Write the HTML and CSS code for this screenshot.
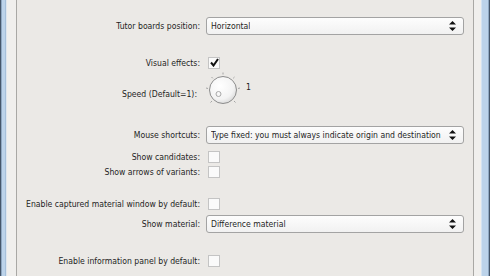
FILE: index.html
```html
<!DOCTYPE html>
<html lang="en">
<head>
    <meta charset="UTF-8">
    <title>Preferences</title>
    <link rel="stylesheet" href="styles.css">
</head>
<body>
    <div class="window">
        <div class="edge edge-left"></div>
        <div class="gutter"></div>
        <div class="panel">
            <div class="row row-combo r1">
                <span class="label">Tutor boards position:</span>
                <div class="combo"><span class="combo-text">Horizontal</span><span class="arrows"><svg width="7" height="10" viewBox="0 0 7 10"><path d="M3.5 0 L7 3.5 L0 3.5 Z M0 6.5 L7 6.5 L3.5 10 Z" fill="#111"/></svg></span></div>
            </div>
            <div class="row row-check r2">
                <span class="label">Visual effects:</span>
                <span class="check"><svg width="9" height="9" viewBox="0 0 9 9"><path d="M1 4.5 L3.5 7.5 L8 1" fill="none" stroke="#111" stroke-width="2"/></svg></span>
            </div>
            <div class="row row-knob r3">
                <span class="label label-knob">Speed (Default=1):</span>
                <div class="dial">
                    <svg width="36" height="36" viewBox="0 0 36 36">
                        <g stroke="#a4a4a4" stroke-width="1">
                            <line x1="18" y1="0.5" x2="18" y2="2.5"/>
                            <line x1="6.5" y1="5" x2="7.8" y2="6.3"/>
                            <line x1="29.5" y1="5" x2="28.2" y2="6.3"/>
                            <line x1="1" y1="16" x2="3" y2="16.5"/>
                            <line x1="35" y1="16" x2="33" y2="16.5"/>
                            <line x1="5.5" y1="30.5" x2="7" y2="29"/>
                            <line x1="30.5" y1="30.5" x2="29" y2="29"/>
                        </g>
                        <defs>
                            <radialGradient id="knob" cx="0.4" cy="0.35" r="0.7">
                                <stop offset="0" stop-color="#ffffff"/>
                                <stop offset="0.7" stop-color="#f3f3f3"/>
                                <stop offset="1" stop-color="#d8d8d8"/>
                            </radialGradient>
                        </defs>
                        <circle cx="18" cy="18" r="13.5" fill="url(#knob)" stroke="#8c8c8c"/>
                        <circle cx="13.5" cy="22" r="2.5" fill="none" stroke="#a8a8a8"/>
                    </svg>
                </div>
                <span class="dial-value">1</span>
            </div>
            <div class="row row-combo r4">
                <span class="label">Mouse shortcuts:</span>
                <div class="combo"><span class="combo-text">Type fixed: you must always indicate origin and destination</span><span class="arrows"><svg width="7" height="10" viewBox="0 0 7 10"><path d="M3.5 0 L7 3.5 L0 3.5 Z M0 6.5 L7 6.5 L3.5 10 Z" fill="#111"/></svg></span></div>
            </div>
            <div class="row row-check r5">
                <span class="label">Show candidates:</span>
                <span class="check"></span>
            </div>
            <div class="row row-check r6">
                <span class="label">Show arrows of variants:</span>
                <span class="check"></span>
            </div>
            <div class="row row-check r7">
                <span class="label">Enable captured material window by default:</span>
                <span class="check"></span>
            </div>
            <div class="row row-combo r8">
                <span class="label">Show material:</span>
                <div class="combo"><span class="combo-text">Difference material</span><span class="arrows"><svg width="7" height="10" viewBox="0 0 7 10"><path d="M3.5 0 L7 3.5 L0 3.5 Z M0 6.5 L7 6.5 L3.5 10 Z" fill="#111"/></svg></span></div>
            </div>
            <div class="row row-check r9">
                <span class="label">Enable information panel by default:</span>
                <span class="check"></span>
            </div>
        </div>
        <div class="gutter gutter-right"></div>
        <div class="edge edge-right"></div>
    </div>
</body>
</html>
```

FILE: styles.css
```css
body {
    margin: 0;
    font-family: 'DejaVu Sans Condensed', 'DejaVu Sans', sans-serif;
    font-size: 8.6px;
    color: #1e1e1e;
    background-color: #ebe9e6;
    overflow: hidden;
}

.window {
    display: flex;
    height: 276px;
    width: 490px;
}

.edge {
    width: 7px;
    flex: none;
}

.edge-left {
    background: linear-gradient(to right, #45566a 0, #45566a 1px, #8fa8c2 1px, #8fa8c2 2px, #bcd3ea 2px, #bcd3ea 5px, #a6c0da 5px, #a6c0da 6px, #dfe6ee 6px);
}

.edge-right {
    width: 9px;
    background: linear-gradient(to left, #45566a 0, #45566a 1px, #8fa8c2 1px, #8fa8c2 2px, #bcd3ea 2px, #bcd3ea 8px, #d4e3f2 8px);
}

.gutter {
    width: 9px;
    flex: none;
    background-color: #f0efed;
}

.gutter-right {
    width: 7px;
}

.panel {
    flex: 1;
    min-width: 0;
    border-left: 1px solid #a9a8a5;
    border-right: 1px solid #a9a8a5;
    background-color: #ebe9e6;
    padding: 17px 9px 0 0;
    display: flex;
    flex-direction: column;
}

.row {
    display: grid;
    grid-template-columns: 183px minmax(0, 1fr);
    column-gap: 6px;
    align-items: center;
}

.label {
    text-align: right;
    white-space: nowrap;
}

.row-combo {
    height: 18px;
}

.row-check {
    height: 13px;
}

.r2 { margin-top: 21px; }
.r3 { margin-top: 3px; height: 36px; grid-template-columns: 183px 41px minmax(0, 1fr); column-gap: 0; }
.r4 { margin-top: 18px; }
.r5 { margin-top: 6px; }
.r6 { margin-top: 2px; }
.r7 { margin-top: 19px; }
.r8 { margin-top: 5px; }
.r9 { margin-top: 21px; }

.label-knob {
    padding-top: 8px;
    padding-right: 3px;
}

.dial {
    width: 36px;
    height: 36px;
    margin-left: 5px;
}

.dial-value {
    padding-left: 5px;
    padding-bottom: 6px;
}

.combo {
    height: 16px;
    border: 1px solid #a3a3a3;
    border-radius: 3px;
    background: linear-gradient(to bottom, #fdfdfd, #f1f1f1);
    display: flex;
    align-items: center;
    justify-content: space-between;
    padding: 0 7px 0 4px;
}

.combo-text {
    white-space: nowrap;
    overflow: hidden;
}

.arrows {
    display: flex;
    padding-left: 4px;
}

.check {
    width: 10px;
    height: 10px;
    margin-left: 2px;
    border: 1px solid #c4c4c4;
    background-color: #fafafa;
    display: flex;
    align-items: center;
    justify-content: center;
}
```
